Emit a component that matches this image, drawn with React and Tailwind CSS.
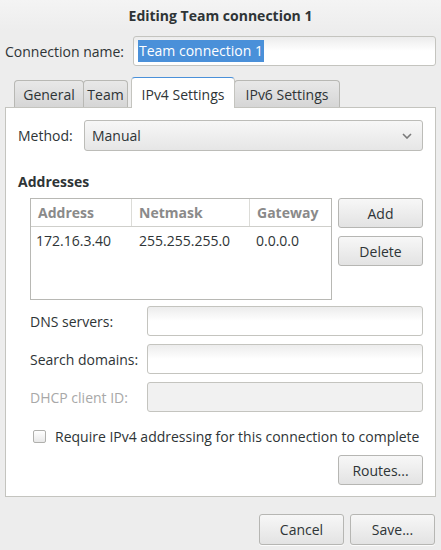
import React from "react";

const font = { fontFamily: '"Open Sans", "DejaVu Sans", sans-serif' };

const Button = ({ children, className = "" }) => (
  <button
    className={`h-[30px] rounded-[3px] border border-[#b6b6b3] bg-gradient-to-b from-[#f7f7f7] to-[#e3e3e3] text-[14px] text-[#2e3436] shadow-[0_1px_0_rgba(255,255,255,0.8)] ${className}`}
  >
    {children}
  </button>
);

const Entry = ({ disabled, className = "", children }) => (
  <div
    className={`h-[30px] rounded-[3px] border border-[#c4c4bf] ${
      disabled ? "bg-[#f1f1f1]" : "bg-gradient-to-b from-[#ececec] via-white to-white"
    } ${className}`}
  >
    {children}
  </div>
);

const Tab = ({ label, active, className = "" }) =>
  active ? (
    <div className={`relative z-10 -mb-px flex h-[31px] items-center justify-center rounded-t-[4px] border border-b-0 border-[#c4c4bf] border-t-[#4a90d9] bg-white pt-[2px] text-[#2e3436] ${className}`}>
      {label}
    </div>
  ) : (
    <div className={`mt-[3px] flex h-[27px] items-center justify-center rounded-t-[4px] border border-b-0 border-[#b8b8b4] bg-gradient-to-b from-[#e8e8e8] to-[#d6d6d6] text-[#2e3436] ${className}`}>
      {label}
    </div>
  );

export default function App() {
  return (
    <div style={font} className="w-[441px] h-[550px] overflow-hidden bg-[#ededed] text-[14px] text-[#2e3436]">
      {/* title bar */}
      <div className="flex h-[31px] items-center justify-center bg-gradient-to-b from-[#f4f4f4] to-[#ededed] text-[14px] font-bold">
        Editing Team connection 1
      </div>

      {/* connection name */}
      <div className="mt-[5px] flex items-center pl-[5px] pr-[5px]">
        <span className="w-[128px]">Connection name:</span>
        <Entry className="flex flex-1 items-center bg-white px-[4px]">
          <span className="bg-[#4a90d9] px-[1px] py-[2px] leading-[18px] text-white">Team connection 1</span>
        </Entry>
      </div>

      {/* tabs */}
      <div className="mt-[11px] flex items-end pl-[14px]">
        <Tab label="General" className="w-[70px]" />
        <Tab label="Team" className="-ml-px w-[45px]" />
        <Tab label="IPv4 Settings" active className="ml-[3px] w-[104px]" />
        <Tab label="IPv6 Settings" className="-ml-px w-[106px]" />
      </div>

      {/* notebook page */}
      <div className="mx-[5px] h-[390px] border border-[#c4c4bf] bg-white px-[12px] pt-[12px]">
        <div className="flex items-center">
          <span className="w-[66px]">Method:</span>
          <div className="flex h-[31px] flex-1 items-center justify-between rounded-[3px] border border-[#bcbcb8] bg-gradient-to-b from-[#f7f7f7] to-[#e6e6e6] pl-[7px] pr-[10px]">
            <span>Manual</span>
            <svg width="10" height="6" viewBox="0 0 10 6">
              <path d="M1 1l4 4 4-4" fill="none" stroke="#7a7a7a" strokeWidth="1.6" />
            </svg>
          </div>
        </div>

        <div className="mt-[20px] font-bold">Addresses</div>

        <div className="mt-[6px] flex pl-[12px]">
          <div className="h-[102px] w-[303px] border border-[#b8b8b4] bg-white">
            <div className="grid h-[28px] grid-cols-[101px_118px_1fr] border-b border-[#cfcfcb] font-bold text-[#8a8a8a]">
              <div className="flex items-center border-r border-[#dcdcd8] pl-[7px]">Address</div>
              <div className="flex items-center border-r border-[#dcdcd8] pl-[7px]">Netmask</div>
              <div className="flex items-center pl-[7px]">Gateway</div>
            </div>
            <div className="grid h-[26px] grid-cols-[101px_118px_1fr] items-center text-[#2e3436]">
              <div className="pl-[5px]">172.16.3.40</div>
              <div className="pl-[7px]">255.255.255.0</div>
              <div className="pl-[6px]">0.0.0.0</div>
            </div>
          </div>
          <div className="ml-[6px] flex flex-col gap-[8px]">
            <Button className="w-[85px]">Add</Button>
            <Button className="w-[85px]">Delete</Button>
          </div>
        </div>

        <div className="mt-[6px] flex flex-col gap-[8px] pl-[12px]">
          <div className="flex items-center">
            <span className="w-[117px]">DNS servers:</span>
            <Entry className="flex-1" />
          </div>
          <div className="flex items-center">
            <span className="w-[117px]">Search domains:</span>
            <Entry className="flex-1" />
          </div>
          <div className="flex items-center">
            <span className="w-[117px] text-[#a8a8a8]">DHCP client ID:</span>
            <Entry disabled className="flex-1" />
          </div>
        </div>

        <div className="mt-[14px] flex items-center pl-[15px]">
          <span className="h-[13px] w-[13px] rounded-[2px] border border-[#b0b0ad] bg-gradient-to-b from-white to-[#e8e8e8]" />
          <span className="ml-[9px]">Require IPv4 addressing for this connection to complete</span>
        </div>

        <div className="mt-[8px] flex justify-end">
          <Button className="w-[85px]">Routes...</Button>
        </div>
      </div>

      {/* dialog buttons */}
      <div className="mt-[17px] flex justify-end gap-[6px] pr-[6px]">
        <Button className="h-[31px] w-[85px]">Cancel</Button>
        <Button className="h-[31px] w-[85px]">Save...</Button>
      </div>
    </div>
  );
}
